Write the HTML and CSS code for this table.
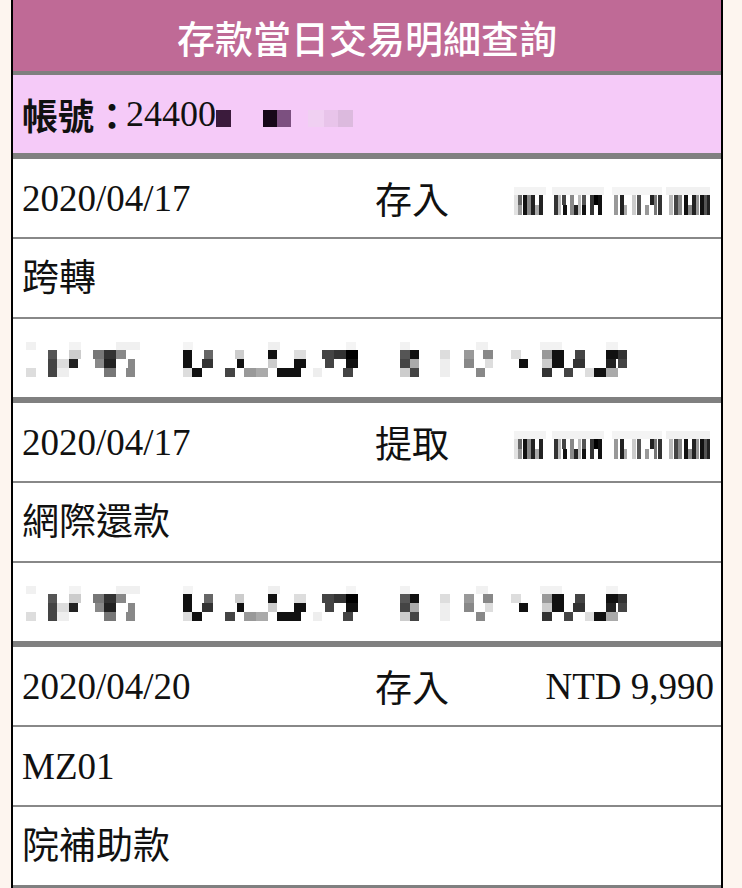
FILE: index.html
```html
<!DOCTYPE html>
<html lang="zh-Hant">
<head>
<meta charset="utf-8">
<title>存款當日交易明細查詢</title>
<link rel="stylesheet" href="styles.css">
</head>
<body>
<svg class="defs" width="0" height="0" aria-hidden="true">
  <defs>
    <symbol id="mosaic-long" viewBox="0 0 620 35">
      <g>
        <rect x="6" y="0" width="10" height="8" fill="#f1f1f1"/>
        <rect x="49" y="0" width="12" height="8" fill="#f3f3f3"/>
        <rect x="96" y="0" width="24" height="8" fill="#f0f0f0"/>
        <rect x="163" y="0" width="10" height="8" fill="#f4f4f4"/>
        <rect x="248" y="0" width="12" height="8" fill="#efefef"/>
        <rect x="326" y="0" width="10" height="8" fill="#f4f4f4"/>
        <rect x="380" y="0" width="10" height="8" fill="#f2f2f2"/>
        <rect x="456" y="0" width="12" height="8" fill="#f1f1f1"/>
        <rect x="520" y="0" width="22" height="8" fill="#f2f2f2"/>
        <rect x="586" y="0" width="12" height="8" fill="#f3f3f3"/>
      </g>
      <g>
        <rect x="28" y="8" width="9" height="9" fill="#555"/>
        <rect x="49" y="8" width="12" height="9" fill="#ccc"/>
        <rect x="73" y="8" width="11" height="9" fill="#777"/>
        <rect x="84" y="8" width="12" height="9" fill="#333"/>
        <rect x="96" y="8" width="10" height="9" fill="#888"/>
        <rect x="163" y="8" width="9" height="9" fill="#111"/>
        <rect x="184" y="8" width="9" height="9" fill="#666"/>
        <rect x="215" y="8" width="9" height="9" fill="#ccc"/>
        <rect x="248" y="8" width="9" height="9" fill="#111"/>
        <rect x="274" y="8" width="12" height="9" fill="#ddd"/>
        <rect x="302" y="8" width="12" height="9" fill="#444"/>
        <rect x="314" y="8" width="12" height="9" fill="#333"/>
        <rect x="326" y="8" width="12" height="9" fill="#000"/>
        <rect x="380" y="8" width="10" height="9" fill="#555"/>
        <rect x="390" y="8" width="9" height="9" fill="#111"/>
        <rect x="420" y="8" width="10" height="9" fill="#ddd"/>
        <rect x="444" y="8" width="10" height="9" fill="#999"/>
        <rect x="463" y="8" width="10" height="9" fill="#888"/>
        <rect x="491" y="8" width="10" height="9" fill="#ddd"/>
        <rect x="522" y="8" width="10" height="9" fill="#999"/>
        <rect x="532" y="8" width="12" height="9" fill="#111"/>
        <rect x="555" y="8" width="10" height="9" fill="#444"/>
        <rect x="586" y="8" width="12" height="9" fill="#111"/>
        <rect x="598" y="8" width="9" height="9" fill="#333"/>
      </g>
      <g>
        <rect x="28" y="17" width="9" height="9" fill="#444"/>
        <rect x="37" y="17" width="12" height="9" fill="#ddd"/>
        <rect x="49" y="17" width="9" height="9" fill="#222"/>
        <rect x="75" y="17" width="9" height="9" fill="#888"/>
        <rect x="84" y="17" width="12" height="9" fill="#222"/>
        <rect x="108" y="17" width="7" height="9" fill="#888"/>
        <rect x="163" y="17" width="9" height="9" fill="#111"/>
        <rect x="182" y="17" width="11" height="9" fill="#333"/>
        <rect x="217" y="17" width="7" height="9" fill="#111"/>
        <rect x="248" y="17" width="9" height="9" fill="#ccc"/>
        <rect x="274" y="17" width="12" height="9" fill="#111"/>
        <rect x="305" y="17" width="9" height="9" fill="#444"/>
        <rect x="326" y="17" width="12" height="9" fill="#111"/>
        <rect x="380" y="17" width="10" height="9" fill="#444"/>
        <rect x="390" y="17" width="9" height="9" fill="#aaa"/>
        <rect x="420" y="17" width="10" height="9" fill="#eee"/>
        <rect x="444" y="17" width="10" height="9" fill="#888"/>
        <rect x="465" y="17" width="8" height="9" fill="#ddd"/>
        <rect x="499" y="17" width="9" height="9" fill="#111"/>
        <rect x="522" y="17" width="10" height="9" fill="#ccc"/>
        <rect x="532" y="17" width="12" height="9" fill="#111"/>
        <rect x="553" y="17" width="12" height="9" fill="#333"/>
        <rect x="586" y="17" width="10" height="9" fill="#222"/>
        <rect x="598" y="17" width="9" height="9" fill="#444"/>
      </g>
      <g>
        <rect x="6" y="26" width="10" height="9" fill="#ddd"/>
        <rect x="28" y="26" width="9" height="9" fill="#444"/>
        <rect x="37" y="26" width="12" height="9" fill="#eee"/>
        <rect x="84" y="26" width="12" height="9" fill="#777"/>
        <rect x="106" y="26" width="9" height="9" fill="#888"/>
        <rect x="163" y="26" width="9" height="9" fill="#ddd"/>
        <rect x="172" y="26" width="10" height="9" fill="#111"/>
        <rect x="205" y="26" width="10" height="9" fill="#444"/>
        <rect x="224" y="26" width="12" height="9" fill="#999"/>
        <rect x="236" y="26" width="12" height="9" fill="#aaa"/>
        <rect x="257" y="26" width="24" height="9" fill="#111"/>
        <rect x="293" y="26" width="9" height="9" fill="#eee"/>
        <rect x="323" y="26" width="10" height="9" fill="#444"/>
        <rect x="380" y="26" width="10" height="9" fill="#ccc"/>
        <rect x="390" y="26" width="9" height="9" fill="#444"/>
        <rect x="420" y="26" width="10" height="9" fill="#eee"/>
        <rect x="456" y="26" width="9" height="9" fill="#888"/>
        <rect x="522" y="26" width="10" height="9" fill="#333"/>
        <rect x="544" y="26" width="9" height="9" fill="#444"/>
        <rect x="565" y="26" width="9" height="9" fill="#ddd"/>
        <rect x="574" y="26" width="12" height="9" fill="#111"/>
        <rect x="586" y="26" width="12" height="9" fill="#aaa"/>
      </g>
    </symbol>
    <symbol id="mosaic-amount" viewBox="0 0 200 28" preserveAspectRatio="none">
      <g>
        <rect x="0" y="0" width="32" height="8" fill="#f3f3f3"/>
        <rect x="38" y="0" width="52" height="8" fill="#f2f2f2"/>
        <rect x="98" y="0" width="50" height="8" fill="#f4f4f4"/>
        <rect x="152" y="0" width="44" height="8" fill="#f1f1f1"/>
        <rect x="0" y="8" width="4" height="20" fill="#e2e2e2"/>
        <rect x="4" y="8" width="4" height="10" fill="#666"/>
        <rect x="4" y="18" width="4" height="10" fill="#999"/>
        <rect x="9" y="8" width="4" height="20" fill="#111"/>
        <rect x="13" y="8" width="4" height="20" fill="#888"/>
        <rect x="17" y="8" width="4" height="20" fill="#222"/>
        <rect x="21" y="18" width="4" height="10" fill="#aaa"/>
        <rect x="25" y="8" width="4" height="20" fill="#222"/>
        <rect x="40" y="8" width="4" height="20" fill="#333"/>
        <rect x="44" y="8" width="3" height="20" fill="#bbb"/>
        <rect x="48" y="8" width="4" height="10" fill="#444"/>
        <rect x="49" y="18" width="4" height="10" fill="#111"/>
        <rect x="56" y="8" width="4" height="20" fill="#888"/>
        <rect x="60" y="18" width="4" height="10" fill="#222"/>
        <rect x="64" y="8" width="3" height="20" fill="#bbb"/>
        <rect x="68" y="8" width="4" height="10" fill="#555"/>
        <rect x="68" y="18" width="4" height="10" fill="#111"/>
        <rect x="76" y="8" width="4" height="20" fill="#333"/>
        <rect x="80" y="8" width="4" height="10" fill="#000"/>
        <rect x="84" y="8" width="4" height="20" fill="#111"/>
        <rect x="100" y="8" width="4" height="20" fill="#999"/>
        <rect x="106" y="8" width="4" height="20" fill="#222"/>
        <rect x="110" y="18" width="3" height="10" fill="#aaa"/>
        <rect x="118" y="8" width="4" height="20" fill="#ccc"/>
        <rect x="123" y="8" width="4" height="20" fill="#555"/>
        <rect x="131" y="18" width="4" height="10" fill="#999"/>
        <rect x="136" y="8" width="4" height="10" fill="#222"/>
        <rect x="140" y="8" width="3" height="20" fill="#777"/>
        <rect x="144" y="8" width="4" height="20" fill="#333"/>
        <rect x="155" y="8" width="4" height="20" fill="#bbb"/>
        <rect x="160" y="8" width="4" height="20" fill="#444"/>
        <rect x="164" y="8" width="4" height="20" fill="#888"/>
        <rect x="170" y="8" width="4" height="20" fill="#111"/>
        <rect x="174" y="18" width="4" height="10" fill="#888"/>
        <rect x="178" y="8" width="4" height="20" fill="#222"/>
        <rect x="182" y="8" width="3" height="20" fill="#999"/>
        <rect x="186" y="8" width="4" height="20" fill="#111"/>
        <rect x="190" y="8" width="3" height="20" fill="#555"/>
        <rect x="193" y="8" width="3" height="20" fill="#222"/>
      </g>
    </symbol>
  </defs>
</svg>

<main class="sheet">
  <header class="title">存款當日交易明細查詢</header>

  <section class="account">
    <span class="account-label">帳號：</span><span class="account-no">24400</span><svg class="mask-account" width="140" height="17" viewBox="0 0 140 17" aria-hidden="true"><rect x="0" y="0" width="15" height="17" fill="#3b1b3c"/><rect x="47" y="0" width="14" height="17" fill="#160818"/><rect x="61" y="0" width="14" height="17" fill="#7c5080"/><rect x="92" y="0" width="16" height="17" fill="#f0d0f2"/><rect x="108" y="0" width="14" height="17" fill="#e8c4ea"/><rect x="122" y="0" width="15" height="17" fill="#dcbade"/></svg>
  </section>

  <section class="group">
    <div class="row tri">
      <span class="date">2020/04/17</span>
      <span class="type">存入</span>
      <span class="amount"><svg class="mask-amount" width="200" height="28" aria-hidden="true"><use href="#mosaic-amount"/></svg></span>
    </div>
    <div class="row">跨轉</div>
    <div class="row"><svg class="mask-long" width="620" height="35" aria-hidden="true"><use href="#mosaic-long"/></svg></div>
  </section>

  <section class="group">
    <div class="row tri">
      <span class="date">2020/04/17</span>
      <span class="type">提取</span>
      <span class="amount"><svg class="mask-amount" width="200" height="28" aria-hidden="true"><use href="#mosaic-amount"/></svg></span>
    </div>
    <div class="row">網際還款</div>
    <div class="row"><svg class="mask-long" width="620" height="35" aria-hidden="true"><use href="#mosaic-long"/></svg></div>
  </section>

  <section class="group">
    <div class="row tri">
      <span class="date">2020/04/20</span>
      <span class="type">存入</span>
      <span class="amount">NTD 9,990</span>
    </div>
    <div class="row">MZ01</div>
    <div class="row">院補助款</div>
  </section>
</main>
</body>
</html>
```

FILE: styles.css
```css
html, body {
  margin: 0;
  padding: 0;
}

body {
  background: #fdf5ef;
  font-family: "Liberation Serif", "Noto Sans CJK TC", serif;
  color: #111;
  overflow: hidden;
}

.defs {
  position: absolute;
  width: 0;
  height: 0;
  overflow: hidden;
}

.sheet {
  box-sizing: border-box;
  width: 712px;
  margin-left: 11px;
  border-left: 2px solid #000;
  border-right: 2px solid #000;
  background: #fff;
}

.title {
  box-sizing: border-box;
  height: 75px;
  padding-top: 2px;
  background: #bf6a96;
  border-bottom: 4px solid #7f7f7f;
  display: flex;
  align-items: center;
  justify-content: center;
  color: #fff;
  font-family: "Noto Sans CJK TC", "Noto Sans", sans-serif;
  font-size: 38px;
  font-weight: 500;
  line-height: 1;
}

.account {
  height: 78px;
  background: #f5caf8;
  border-bottom: 6px solid #808080;
  display: flex;
  align-items: center;
  padding-left: 9px;
  font-size: 36px;
  line-height: 1;
}

.account-label {
  font-family: "Noto Sans CJK TC", sans-serif;
  font-weight: 700;
  font-size: 36px;
  margin-right: -4px;
}

.account-no {
  font-family: "Liberation Serif", serif;
  font-size: 36px;
}

.mask-account {
  display: block;
  align-self: center;
  margin-top: 8px;
}

.group {
  border-bottom: 6px solid #808080;
}

.row {
  box-sizing: border-box;
  height: 78px;
  display: flex;
  align-items: center;
  padding: 0 7px 0 9px;
  font-size: 37px;
  line-height: 1;
  background: #fff;
}

.row + .row {
  border-top: 2px solid #888;
  height: 80px;
}

.tri {
  display: grid;
  grid-template-columns: 353px 1fr auto;
  align-items: center;
}

.type {
  font-family: "Noto Sans CJK TC", sans-serif;
}

.amount {
  justify-self: end;
}

.mask-amount {
  display: block;
  margin-top: 6px;
}

.mask-long {
  display: block;
  margin-left: -2px;
  margin-top: 2px;
}
```
